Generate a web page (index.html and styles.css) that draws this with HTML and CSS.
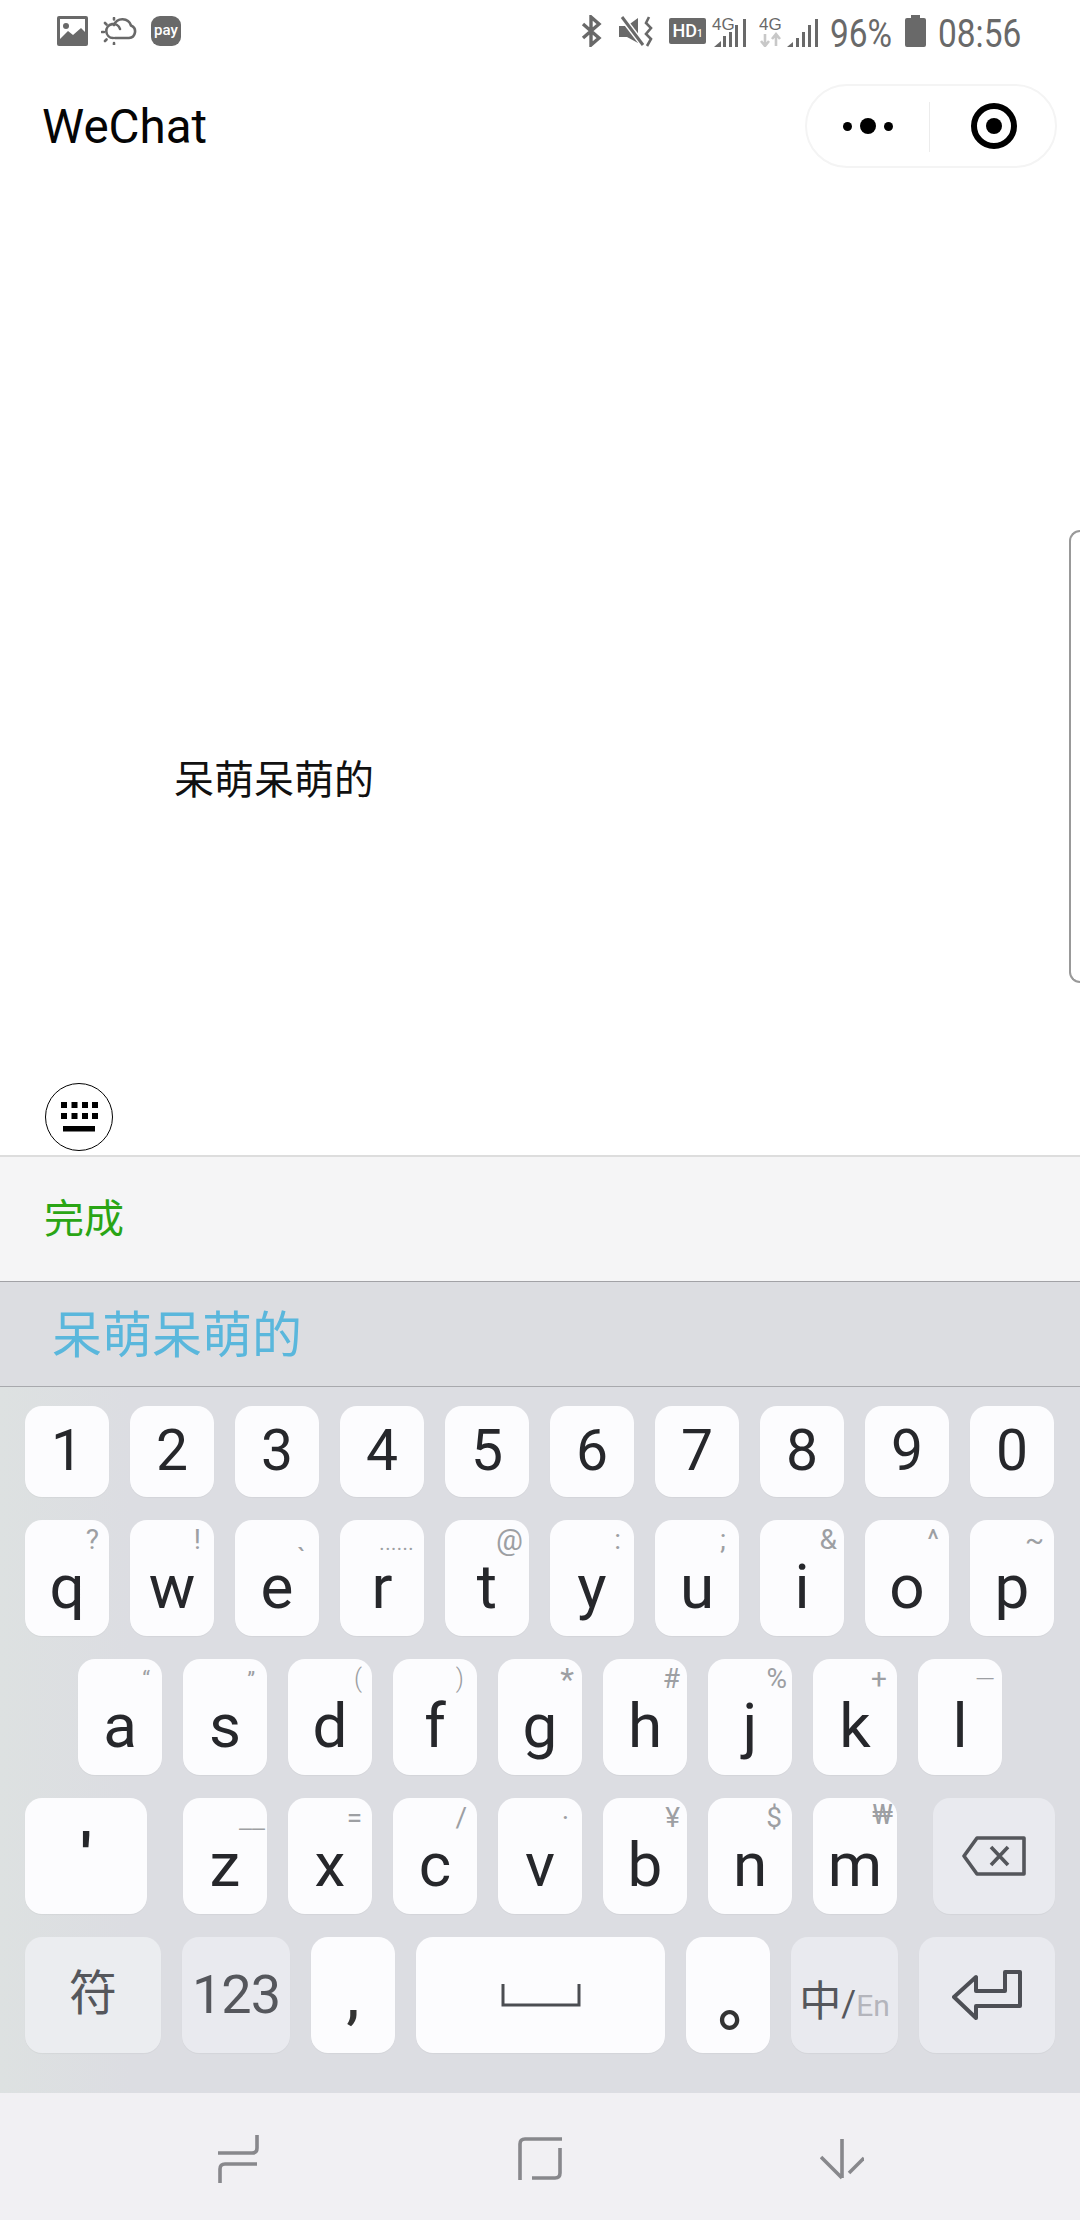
FILE: index.html
```html
<!DOCTYPE html>
<html>
  <head>
    <meta charset="utf-8">
    <title>WeChat</title>
    <link rel="stylesheet" href="styles.css">
  </head>
  <body>

    <div class="status">
      <div class="status-left">
        <svg class="ic-image" width="31" height="30" viewBox="0 0 31 30">
          <rect width="31" height="30" rx="2" fill="#696969"/>
          <rect x="3" y="3" width="25" height="22" fill="#fff"/>
          <circle cx="9" cy="10" r="3" fill="#696969"/>
          <path d="M3 23 L11 15 L16 19 L24 12 L28 16 V27 H3 Z" fill="#696969"/>
        </svg>
        <svg class="ic-weather" width="36" height="28" viewBox="0 0 36 28" fill="none" stroke="#696969" stroke-width="2.6" stroke-linecap="round">
          <path d="M12 21 A7 7 0 1 1 19 12"/>
          <path d="M14 21 H28 A6.5 6.5 0 0 0 30 8.5 A9 9 0 0 0 13 8"/>
          <path d="M1 15 H3 M4 6 L5.5 7.5 M4 24 L5.5 22.5 M13 1 V2.5 M13 26 V27.5"/>
        </svg>
        <div class="pay">pay</div>
      </div>
      <div class="status-right">
        <svg class="ic-bt" width="21" height="32" viewBox="0 0 21 32" fill="none" stroke="#696969" stroke-width="3.4">
          <path d="M2 9 L18 23 L10 30 V2 L18 9 L2 23"/>
        </svg>
        <svg class="ic-mute" width="34" height="32" viewBox="0 0 34 32">
          <path d="M0 11 H8 L19 3 V28 L8 22 H0 Z" fill="#696969"/>
          <path d="M2 1 L25 31" stroke="#fff" stroke-width="6"/>
          <path d="M3 2 L24 30" stroke="#696969" stroke-width="3"/>
          <path d="M30 2 L27 8 L32 13 L27 19 L32 24 L28 31" fill="none" stroke="#696969" stroke-width="2.6"/>
        </svg>
        <div class="hd">HD<span>1</span></div>
        <svg class="ic-sig" width="36" height="32" viewBox="0 0 36 32">
          <text x="1" y="15" class="sig-text">4G</text>
          <path d="M3 32 L10 26 V32 Z" fill="#696969"/>
          <rect x="12" y="21" width="3" height="11" fill="#696969"/>
          <rect x="18" y="17" width="3" height="15" fill="#696969"/>
          <rect x="24" y="10" width="3" height="22" fill="#696969"/>
          <rect x="32" y="4" width="3" height="28" fill="#696969"/>
        </svg>
        <svg class="ic-sig2" width="60" height="32" viewBox="0 0 60 32">
          <text x="0" y="15" class="sig-text">4G</text>
          <path d="M6 19 V30 M2 26 L6 31 L10 26" fill="none" stroke="#c8c8c8" stroke-width="2.6"/>
          <path d="M17 31 V20 M13 24 L17 19 L21 24" fill="none" stroke="#c8c8c8" stroke-width="2.6"/>
          <path d="M28 32 L34 27 V32 Z" fill="#696969"/>
          <rect x="37" y="23" width="3" height="9" fill="#696969"/>
          <rect x="43" y="17" width="3" height="15" fill="#696969"/>
          <rect x="49" y="10" width="3" height="22" fill="#696969"/>
          <rect x="56" y="4" width="3" height="28" fill="#696969"/>
        </svg>
        <div class="pct">96%</div>
        <svg class="ic-batt" width="21" height="32" viewBox="0 0 21 32">
          <path d="M6 0 H15 V3 H19 Q21 3 21 5 V30 Q21 32 19 32 H2 Q0 32 0 30 V5 Q0 3 2 3 H6 Z" fill="#696969"/>
        </svg>
        <div class="time">08:56</div>
      </div>
    </div>

    <div class="header">
      <div class="title">WeChat</div>
      <div class="capsule">
        <div class="capsule-part more">
          <span class="dot"></span><span class="dot big"></span><span class="dot"></span>
        </div>
        <div class="capsule-part with-line">
          <div class="ring"><span></span></div>
        </div>
      </div>
    </div>

    <div class="main">
      <div class="editor-text">呆萌呆萌的</div>
      <div class="side-handle"></div>
      <div class="kb-toggle">
        <svg width="37" height="30" viewBox="0 0 37 30" fill="#000">
          <rect x="0" y="0" width="6" height="6"/><rect x="10.5" y="0" width="6" height="6"/><rect x="21" y="0" width="6" height="6"/><rect x="31" y="0" width="6" height="6"/>
          <rect x="0" y="11" width="6" height="6"/><rect x="10.5" y="11" width="6" height="6"/><rect x="21" y="11" width="6" height="6"/><rect x="31" y="11" width="6" height="6"/>
          <rect x="2" y="24" width="32" height="5.5"/>
        </svg>
      </div>
    </div>

    <div class="done-bar">完成</div>
    <div class="candidates">呆萌呆萌的</div>

    <div class="keyboard">
      <div class="row digits">
        <div class="key">1</div><div class="key">2</div><div class="key">3</div><div class="key">4</div><div class="key">5</div>
        <div class="key">6</div><div class="key">7</div><div class="key">8</div><div class="key">9</div><div class="key">0</div>
      </div>

      <div class="row">
        <div class="key"><span class="hint">?</span>q</div>
        <div class="key"><span class="hint r13">!</span>w</div>
        <div class="key"><span class="hint tick">`</span>e</div>
        <div class="key"><span class="hint ellipsis">......</span>r</div>
        <div class="key"><span class="hint at">@</span>t</div>
        <div class="key"><span class="hint r13">:</span>y</div>
        <div class="key"><span class="hint r13">;</span>u</div>
        <div class="key"><span class="hint r7">&amp;</span>i</div>
        <div class="key"><span class="hint">^</span>o</div>
        <div class="key"><span class="hint">~</span>p</div>
      </div>

      <div class="row center">
        <div class="key"><span class="hint quote">“</span>a</div>
        <div class="key"><span class="hint quote">”</span>s</div>
        <div class="key"><span class="hint paren">(</span>d</div>
        <div class="key"><span class="hint paren r13">)</span>f</div>
        <div class="key"><span class="hint star">*</span>g</div>
        <div class="key"><span class="hint r7">#</span>h</div>
        <div class="key"><span class="hint r5">%</span>j</div>
        <div class="key"><span class="hint">+</span>k</div>
        <div class="key"><span class="hint dash">—</span>l</div>
      </div>

      <div class="row between">
        <div class="key wide apos">'</div>
        <div class="letters">
          <div class="key"><span class="hint under">__</span>z</div>
          <div class="key"><span class="hint">=</span>x</div>
          <div class="key"><span class="hint">/</span>c</div>
          <div class="key"><span class="hint r13">·</span>v</div>
          <div class="key"><span class="hint r7">¥</span>b</div>
          <div class="key"><span class="hint">$</span>n</div>
          <div class="key"><span class="hint won">₩</span>m</div>
        </div>
        <div class="key wide fn icon">
          <svg width="64" height="40" viewBox="0 0 64 40" fill="none" stroke="#54565b" stroke-width="3.6">
            <path d="M15 2 H62 V38 H15 L2 20 Z" stroke-linejoin="round"/>
            <path d="M29 11 L46 29 M46 11 L29 29"/>
          </svg>
        </div>
      </div>

      <div class="row bottom">
        <div class="key fn sym">符</div>
        <div class="key fn num">123</div>
        <div class="key comma">,</div>
        <div class="key space icon">
          <svg width="80" height="24" viewBox="0 0 80 24" fill="none" stroke="#4b4d52" stroke-width="3">
            <path d="M2 1 V22 H78 V1"/>
          </svg>
        </div>
        <div class="key stop">。</div>
        <div class="key fn lang"><span class="zh">中</span><span class="slash">/</span><span class="en">En</span></div>
        <div class="key fn enter icon">
          <svg width="70" height="50" viewBox="0 0 70 50" fill="none" stroke="#4d4f55" stroke-width="4" stroke-linejoin="round">
            <path d="M2 27 L24 7 V21 H53 V2 H68 V36 H24 V48 Z"/>
          </svg>
        </div>
      </div>
    </div>

    <div class="navbar">
      <svg width="44" height="50" viewBox="0 0 44 50" fill="none" stroke="#88888c" stroke-width="3.6">
        <path d="M41 1 V14 Q41 19 36 19 H2"/>
        <path d="M41 30 H9 Q4 30 4 35 V49"/>
      </svg>
      <svg width="44" height="44" viewBox="0 0 44 44" fill="none" stroke="#88888c" stroke-width="3.6">
        <path d="M2 43 V7 Q2 2 7 2 H44"/>
        <path d="M42 11 V36 Q42 41 37 41 H14"/>
      </svg>
      <svg width="44" height="44" viewBox="0 0 44 44" fill="none" stroke="#88888c" stroke-width="3.6">
        <path d="M22 2 V41 M1 20 L22 41"/>
        <path d="M29 36 L44 21"/>
      </svg>
    </div>

  </body>
</html>
```
FILE: styles.css
```css
* {
  box-sizing: border-box;
}

body {
  margin: 0;
  width: 1080px;
  height: 2220px;
  display: flex;
  flex-direction: column;
  background: #fff;
  color: #000;
  font-family: Roboto, "Noto Sans CJK SC", sans-serif;
  overflow: hidden;
}

/* status bar */
.status {
  height: 64px;
  flex: none;
  display: flex;
  justify-content: space-between;
  padding: 15px 59px 0 57px;
  color: #696969;
}

.status-left,
.status-right {
  display: flex;
  align-items: flex-start;
}

.ic-image { margin-top: 1px; }
.ic-weather { margin: 2px 0 0 13px; }

.pay {
  width: 30px;
  height: 30px;
  margin: 1px 0 0 14px;
  border-radius: 9px;
  background: #696969;
  color: #fff;
  font-size: 15px;
  font-weight: 500;
  line-height: 28px;
  text-align: center;
}

.ic-mute { margin-left: 17px; }

.hd {
  width: 37px;
  height: 26px;
  margin: 3px 0 0 16px;
  background: #696969;
  border-radius: 2px;
  color: #fff;
  font-size: 18px;
  font-weight: 500;
  line-height: 26px;
  text-align: center;
  white-space: nowrap;
}

.hd span {
  font-size: 10px;
}

.ic-sig { margin-left: 5px; }
.ic-sig2 { margin-left: 12px; }

.sig-text {
  font-family: "Liberation Sans", sans-serif;
  font-size: 17px;
  font-weight: 400;
  fill: #696969;
}

.pct,
.time {
  font-size: 38px;
  line-height: 38px;
  white-space: nowrap;
  transform-origin: left center;
}

.pct {
  width: 62px;
  margin-left: 11px;
  transform: scaleX(.88);
}

.ic-batt { margin-left: 13px; }

.time {
  width: 83px;
  margin-left: 12px;
  transform: scaleX(.88);
}

/* title bar */
.header {
  height: 124px;
  flex: none;
  display: flex;
  align-items: center;
  justify-content: space-between;
  padding: 0 23px 0 42px;
}

.title {
  padding-top: 2px;
  font-size: 47.5px;
  color: #050505;
}

.capsule {
  width: 252px;
  height: 84px;
  display: flex;
  border: 2px solid #f4f4f4;
  border-radius: 42px;
}

.capsule-part {
  flex: 1;
  display: flex;
  align-items: center;
  justify-content: center;
  gap: 8px;
  position: relative;
  padding-left: 3px;
}

.capsule-part.more {
  flex: none;
  width: 122px;
  padding: 0 0 0 0;
}

.with-line::before {
  content: "";
  position: absolute;
  left: 0;
  top: 16px;
  bottom: 14px;
  width: 1px;
  background: #ececec;
}

.dot {
  width: 9px;
  height: 9px;
  border-radius: 50%;
  background: #000;
}

.dot.big {
  width: 16px;
  height: 16px;
}

.ring {
  width: 46px;
  height: 46px;
  border: 6px solid #000;
  border-radius: 50%;
  display: flex;
  align-items: center;
  justify-content: center;
}

.ring span {
  width: 16px;
  height: 16px;
  border-radius: 50%;
  background: #000;
}

/* page */
.main {
  flex: 1;
  display: flex;
  flex-direction: column;
  position: relative;
  padding: 569px 0 4px 45px;
}

.editor-text {
  margin-left: 129px;
  font-size: 40px;
  line-height: 48px;
  color: #111;
}

.side-handle {
  position: absolute;
  right: 0;
  top: 342px;
  width: 11px;
  height: 453px;
  border: 2px solid #999;
  border-right: 0;
  border-radius: 12px 0 0 12px;
}

.kb-toggle {
  width: 68px;
  height: 68px;
  margin-top: auto;
  border: 1.5px solid #000;
  border-radius: 50%;
  display: flex;
  align-items: center;
  justify-content: center;
}

/* bars over the keyboard */
.done-bar {
  height: 126px;
  flex: none;
  padding-left: 44px;
  background: #f5f5f6;
  border-top: 2px solid #ddd;
  color: #2aa515;
  font-size: 40px;
  line-height: 126px;
}

.candidates {
  height: 106px;
  flex: none;
  padding-left: 52px;
  background: #dcdde1;
  border-top: 1px solid #a2a2a6;
  border-bottom: 1px solid #a8a9ad;
  color: #5ab7dc;
  font-size: 50px;
  line-height: 108px;
}

/* keyboard */
.keyboard {
  height: 706px;
  flex: none;
  display: flex;
  flex-direction: column;
  gap: 23px;
  padding: 19px 25px 0;
  background: linear-gradient(90deg, #dde1e1, #dcdde2 12%);
}

.row {
  display: flex;
  gap: 21px;
  height: 116px;
  flex: none;
}

.row.center {
  justify-content: center;
}

.row.between {
  justify-content: space-between;
}

.letters {
  display: flex;
  gap: 21px;
}

.key {
  width: 84px;
  flex: none;
  position: relative;
  padding-top: 37px;
  background: #fcfcfe;
  border-radius: 17px;
  box-shadow: 0 1px 1px rgba(0, 0, 0, .04);
  color: #26272b;
  font-size: 62px;
  line-height: 60px;
  text-align: center;
}

.digits {
  height: 91px;
}

.digits .key {
  padding-top: 15px;
  font-size: 57px;
}

.key.wide {
  width: 122px;
}

.key.fn {
  background: #e9eaef;
  color: #55575c;
}

.key.icon {
  padding: 0;
  display: flex;
  align-items: center;
  justify-content: center;
}

.apos {
  padding-top: 28px;
  font-weight: 700;
}

.bottom .sym {
  width: 136px;
  padding-top: 27px;
  background: #ebedf0;
  font-size: 48px;
}

.bottom .num {
  width: 108px;
  padding-top: 28px;
  font-size: 54px;
  letter-spacing: -1px;
}

.comma {
  padding-top: 30px;
  font-size: 60px;
  font-weight: 500;
  color: #333;
}

.key.space {
  width: 249px;
}

.stop {
  padding: 32px 0 0 32px;
  font-size: 60px;
  font-weight: 700;
  color: #333;
  font-family: "Noto Sans CJK SC", sans-serif;
}

.lang {
  width: 107px;
  padding: 28px 0 0;
  white-space: nowrap;
}

.lang .zh {
  font-size: 42px;
}

.lang .slash {
  font-size: 36px;
}

.lang .en {
  font-size: 30px;
  color: #b4b5bc;
}

.enter {
  width: 136px;
}

/* the small symbol in the corner of a letter key */
.hint {
  position: absolute;
  top: 5px;
  right: 10px;
  color: #9d9fa3;
  font-size: 28px;
  line-height: 30px;
}

.hint.r13 { right: 13px; }
.hint.r7 { right: 7px; }
.hint.r5 { right: 5px; }

.hint.won {
  top: 3px;
  right: 4px;
  font-size: 28px;
  line-height: 28px;
}

.hint.tick {
  top: 24px;
  right: 13px;
}

.hint.ellipsis {
  top: 8px;
  font-size: 20px;
  letter-spacing: .5px;
}

.hint.at {
  right: 6px;
  font-size: 30px;
}

.hint.quote {
  font-size: 22px;
  right: 12px;
  top: 6px;
}

.hint.paren {
  font-size: 25px;
  font-weight: 300;
}

.hint.star {
  font-size: 32px;
  right: 8px;
}

.hint.dash {
  font-size: 26px;
  font-weight: 300;
  right: 7px;
}

.hint.under {
  top: 6px;
  right: 2px;
  font-size: 30px;
  font-weight: 300;
}

/* android navigation */
.navbar {
  height: 127px;
  flex: none;
  display: flex;
  align-items: center;
  justify-content: center;
  gap: 258px;
  padding-top: 4px;
  background: #f1f0f3;
}
```
